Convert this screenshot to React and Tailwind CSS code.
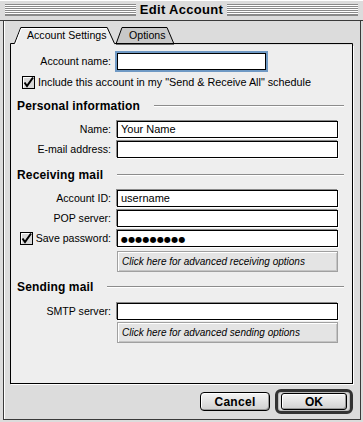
import React from "react";

const F = { fontFamily: '"Liberation Sans", Arial, sans-serif' };

function Field({ w, children, focus }) {
  return (
    <div
      className={`h-[17px] bg-white border border-black text-[11px] leading-[15px] pl-[3px] text-black ${
        focus
          ? "shadow-[0_0_0_2px_#6f99c4]"
          : "shadow-[-1px_-1px_0_#8a8a8a,1px_1px_0_#ffffff]"
      } ${w || "w-full"}`}
    >
      {children}
    </div>
  );
}

function Check() {
  return (
    <svg width="13" height="13" viewBox="0 0 13 13" className="shrink-0">
      <rect x="0.5" y="0.5" width="12" height="12" fill="#d8d8d8" stroke="#000" />
      <path d="M1.5 11.5V1.5H11.5" stroke="#fff" fill="none" />
      <path d="M2.5 6.5L5 10L11 1.5" stroke="#000" strokeWidth="2" fill="none" />
    </svg>
  );
}

function Heading({ children }) {
  return (
    <div className="flex items-center pl-[6px] pr-[8px] h-[14px]">
      <span className="text-[12px] font-bold tracking-[0.15px] text-black" style={F}>
        {children}
      </span>
      <div className="flex-1 ml-[14px] h-[2px] border-t border-[#8c8c8c] border-b border-b-white" />
    </div>
  );
}

function Label({ children }) {
  return (
    <div className="text-right text-[10.6px] leading-[17px] text-black whitespace-nowrap">{children}</div>
  );
}

function AdvButton({ children }) {
  return (
    <div className="h-[21px] w-full bg-[#e4e4e4] border border-[#a0a0a0] shadow-[inset_1px_1px_0_#fff,inset_-1px_-1px_0_#c4c4c4] text-[10px] italic leading-[19px] pl-[4px] text-black">
      {children}
    </div>
  );
}

export default function App() {
  return (
    <div className="w-[363px] h-[422px] bg-[#dcdcdc] flex flex-col select-none" style={F}>
      {/* title bar */}
      <div className="h-[21px] flex items-center px-[5px] border-b border-[#3a3a3a] shadow-[inset_0_1px_0_#fff]">
        <div className="flex-1 h-[12px] bg-[repeating-linear-gradient(to_bottom,#8a8a8a_0px,#8a8a8a_1px,#ffffff_1px,#ffffff_2px)] border-b border-[#8a8a8a]" />
        <div className="px-[4px] text-[13px] font-bold text-black leading-[14px] tracking-[0.3px]">
          Edit Account
        </div>
        <div className="flex-1 h-[12px] bg-[repeating-linear-gradient(to_bottom,#8a8a8a_0px,#8a8a8a_1px,#ffffff_1px,#ffffff_2px)] border-b border-[#8a8a8a]" />
      </div>

      {/* body */}
      <div className="flex-1 ml-[3px] mr-[2px] mb-[2px] border-x border-b border-[#3a3a3a] shadow-[inset_1px_0_0_#fff] flex flex-col">
        <div className="ml-[6px] w-[343px] mt-[6px]">
          {/* tabs */}
          <div className="relative h-[18px]">
            <svg className="absolute inset-0" width="343" height="18" viewBox="0 0 343 18">
              <polygon points="106,17 112,0.5 157,0.5 164,17" fill="#c8c8c8" stroke="#000" />
              <polygon points="1,18 1,17 5,17 11,1 97,1 104,17 104,18" fill="#eeeeee" />
              <polyline
                points="0.5,18 0.5,16.5 4.5,16.5 10.8,0.5 97.2,0.5 104.5,16.5 342.5,16.5 342.5,18"
                fill="none"
                stroke="#000"
              />
              <polyline points="5.5,17.5 11.5,1.5 96.5,1.5" fill="none" stroke="#fff" />
            </svg>
            <div className="relative flex h-[17px] items-center text-[10.6px] text-black whitespace-nowrap">
              <span className="ml-[17px] w-[78px]">Account Settings</span>
              <span className="ml-[24px]">Options</span>
            </div>
          </div>

          {/* panel */}
          <div className="h-[339px] bg-[#eeeeee] border-x border-b border-black shadow-[1px_1px_0_#fff] flex flex-col pr-[14px]">
            <div className="grid grid-cols-[100px_1fr] gap-x-[6px] mt-[8px]">
              <Label>Account name:</Label>
              <Field w="w-[149px]" focus />
            </div>

            <div className="flex items-center mt-[6px] ml-[11px] gap-[3px] h-[13px]">
              <Check />
              <span className="text-[10.8px] text-black whitespace-nowrap">
                Include this account in my "Send &amp; Receive All" schedule
              </span>
            </div>

            <div className="mt-[10px] -mr-[14px]">
              <Heading>Personal information</Heading>
            </div>

            <div className="grid grid-cols-[100px_1fr] gap-x-[6px] gap-y-[3px] mt-[8px]">
              <Label>Name:</Label>
              <Field>Your Name</Field>
              <Label>E-mail address:</Label>
              <Field />
            </div>

            <div className="mt-[10px] -mr-[14px]">
              <Heading>Receiving mail</Heading>
            </div>

            <div className="grid grid-cols-[100px_1fr] gap-x-[6px] gap-y-[3px] mt-[8px]">
              <Label>Account ID:</Label>
              <Field>username</Field>
              <Label>POP server:</Label>
              <Field />
              <div className="flex items-center justify-end gap-[3px]">
                <Check />
                <span className="text-[10.6px] leading-[17px] text-black whitespace-nowrap">Save password:</span>
              </div>
              <Field>
                <span
                  className="text-[8px] leading-[15px] tracking-[0.2px]"
                  style={{ fontFamily: '"DejaVu Sans", sans-serif' }}
                >
                  ●●●●●●●●●
                </span>
              </Field>
              <div />
              <div className="mt-[1px]">
                <AdvButton>Click here for advanced receiving options</AdvButton>
              </div>
            </div>

            <div className="mt-[8px] -mr-[14px]">
              <Heading>Sending mail</Heading>
            </div>

            <div className="grid grid-cols-[100px_1fr] gap-x-[6px] mt-[9px]">
              <Label>SMTP server:</Label>
              <Field />
              <div />
              <div className="mt-[2px]">
                <AdvButton>Click here for advanced sending options</AdvButton>
              </div>
            </div>
          </div>
        </div>

        {/* buttons */}
        <div className="flex-1 flex items-center justify-end pr-[7px] gap-[5px]">
          <div className="w-[70px] h-[19px] rounded-[4px] border border-black bg-[linear-gradient(#f4f4f4,#d0d0d0)] shadow-[inset_1px_1px_0_#fff,inset_-1px_-1px_0_#999] flex items-center justify-center text-[12px] font-bold text-black tracking-[0.3px]">
            Cancel
          </div>
          <div className="w-[78px] h-[25px] rounded-[6px] border-[3px] border-[#333] bg-[#dcdcdc] flex items-center justify-center shadow-[inset_0_0_0_1px_#bbb]">
            <div className="w-[66px] h-[17px] rounded-[3px] border border-black bg-[linear-gradient(#f4f4f4,#d0d0d0)] shadow-[inset_1px_1px_0_#fff,inset_-1px_-1px_0_#999] flex items-center justify-center text-[12px] font-bold text-black">
              OK
            </div>
          </div>
        </div>
      </div>
    </div>
  );
}
